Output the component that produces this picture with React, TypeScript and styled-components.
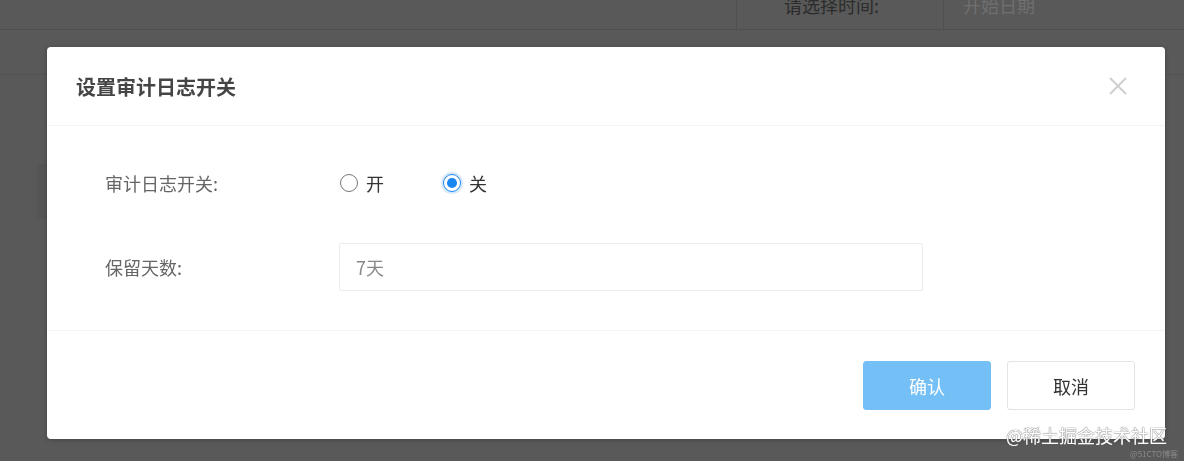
import React from "react";
import styled, { createGlobalStyle } from "styled-components";

const GlobalStyle = createGlobalStyle`
  html, body {
    margin: 0;
    padding: 0;
    background: #595959;
    font-family: "Noto Sans CJK SC", "Noto Sans", "Liberation Sans", sans-serif;
  }
  * { box-sizing: border-box; }
`;

export default function App() {
  return (
    <>
      <GlobalStyle />
      <Page>
        <TopBar>
          <TopSpacer />
          <TimeLabelCell>请选择时间:</TimeLabelCell>
          <DateCell>开始日期</DateCell>
        </TopBar>
        <SubBar />
        <Content>
          <SideStub />
        </Content>

        <Mask>
          <Dialog>
            <DialogHeader>
              <Title>设置审计日志开关</Title>
              <CloseButton aria-label="close">
                <svg width="20" height="20" viewBox="0 0 20 20">
                  <path d="M2 2 L18 18 M18 2 L2 18" stroke="#cfcfcf" strokeWidth="2" fill="none" />
                </svg>
              </CloseButton>
            </DialogHeader>

            <DialogBody>
              <FormRow>
                <Label>审计日志开关:</Label>
                <RadioGroup>
                  <RadioOption>
                    <RadioCircle $checked={false} />
                    <RadioText>开</RadioText>
                  </RadioOption>
                  <RadioOption>
                    <RadioCircle $checked />
                    <RadioText>关</RadioText>
                  </RadioOption>
                </RadioGroup>
              </FormRow>
              <FormRow>
                <Label>保留天数:</Label>
                <TextInput readOnly value="7天" />
              </FormRow>
            </DialogBody>

            <DialogFooter>
              <Button $primary>确认</Button>
              <Button>取消</Button>
            </DialogFooter>
          </Dialog>
        </Mask>

        <Watermark>
          <MarkMain>@稀土掘金技术社区</MarkMain>
          <MarkSmall>@51CTO博客</MarkSmall>
        </Watermark>
      </Page>
    </>
  );
}

const Page = styled.div`
  width: 1184px;
  height: 461px;
  overflow: hidden;
`;

const TopBar = styled.div`
  display: flex;
  height: 30px;
  border-bottom: 1px solid #4f4f4f;
  overflow: hidden;
  line-height: 10px;
  font-size: 18px;
`;

const TopSpacer = styled.div`
  flex: 1;
  border-right: 1px solid #4f4f4f;
`;

const TimeLabelCell = styled.div`
  width: 206px;
  padding-left: 47px;
  color: #2c2c2c;
`;

const DateCell = styled.div`
  width: 241px;
  border-left: 1px solid #4f4f4f;
  padding-left: 19px;
  color: #6f6f6f;
`;

const SubBar = styled.div`
  height: 45px;
  border-bottom: 1px solid #525252;
`;

const Content = styled.div`
  padding: 89px 0 0 37px;
`;

const SideStub = styled.div`
  width: 30px;
  height: 55px;
  background: #555555;
`;

const Mask = styled.div`
  position: fixed;
  inset: 0;
  display: flex;
  align-items: flex-start;
  padding: 47px 19px 0 47px;
`;

const Dialog = styled.div`
  width: 1118px;
  background: #ffffff;
  border-radius: 4px;
  box-shadow: 0 1px 4px rgba(0, 0, 0, 0.25);
`;

const DialogHeader = styled.div`
  display: flex;
  align-items: center;
  justify-content: space-between;
  height: 79px;
  padding: 0 37px 0 29px;
  border-bottom: 1px solid #f3f3f3;
`;

const Title = styled.div`
  font-size: 20px;
  font-weight: 600;
  color: #454545;
`;

const CloseButton = styled.button`
  display: flex;
  padding: 0;
  border: none;
  background: none;
  cursor: pointer;
`;

const DialogBody = styled.div`
  display: flex;
  flex-direction: column;
  gap: 36px;
  padding: 33px 0 39px 58px;
  border-bottom: 1px solid #f3f3f3;
`;

const FormRow = styled.div`
  display: flex;
  align-items: center;
  height: 48px;
`;

const Label = styled.div`
  width: 234px;
  font-size: 18px;
  color: #666666;
`;

const RadioGroup = styled.div`
  display: flex;
  align-items: center;
`;

const RadioOption = styled.label`
  display: flex;
  align-items: center;
  gap: 8px;
  width: 103px;
  padding-left: 1px;
  cursor: pointer;
`;

const RadioCircle = styled.span<{ $checked?: boolean }>`
  position: relative;
  width: 18px;
  height: 18px;
  border-radius: 50%;
  border: 1.5px solid ${(p) => (p.$checked ? "#1a86f0" : "#777777")};
  box-shadow: ${(p) => (p.$checked ? "0 0 0 2px rgba(26,134,240,0.18)" : "none")};

  &::after {
    content: "";
    display: ${(p) => (p.$checked ? "block" : "none")};
    position: absolute;
    inset: 3px;
    border-radius: 50%;
    background: #1a86f0;
  }
`;

const RadioText = styled.span`
  font-size: 18px;
  color: #333333;
`;

const TextInput = styled.input`
  width: 584px;
  height: 48px;
  border: 1px solid #ececec;
  border-radius: 2px;
  padding: 0 16px;
  font-family: inherit;
  font-size: 18px;
  color: #888888;
  outline: none;
`;

const DialogFooter = styled.div`
  display: flex;
  justify-content: flex-end;
  gap: 16px;
  height: 108px;
  padding: 30px 30px 0 0;
`;

const Button = styled.button<{ $primary?: boolean }>`
  width: 128px;
  height: 49px;
  border-radius: 3px;
  font-family: inherit;
  font-size: 18px;
  border: 1px solid ${(p) => (p.$primary ? "#74c0f6" : "#e3e3e3")};
  background: ${(p) => (p.$primary ? "#74c0f6" : "#ffffff")};
  color: ${(p) => (p.$primary ? "#ffffff" : "#333333")};
  cursor: pointer;
`;

const Watermark = styled.div`
  position: fixed;
  right: 6px;
  bottom: 2px;
  display: flex;
  flex-direction: column;
  align-items: flex-end;
`;

const MarkMain = styled.div`
  margin-right: 11px;
  font-size: 18px;
  line-height: 22px;
  color: #ffffff;
  text-shadow: 0 0 1px #666, 0 0 1px #666;
`;

const MarkSmall = styled.div`
  margin-top: 3px;
  font-size: 8px;
  line-height: 10px;
  color: #8a8a8a;
`;
